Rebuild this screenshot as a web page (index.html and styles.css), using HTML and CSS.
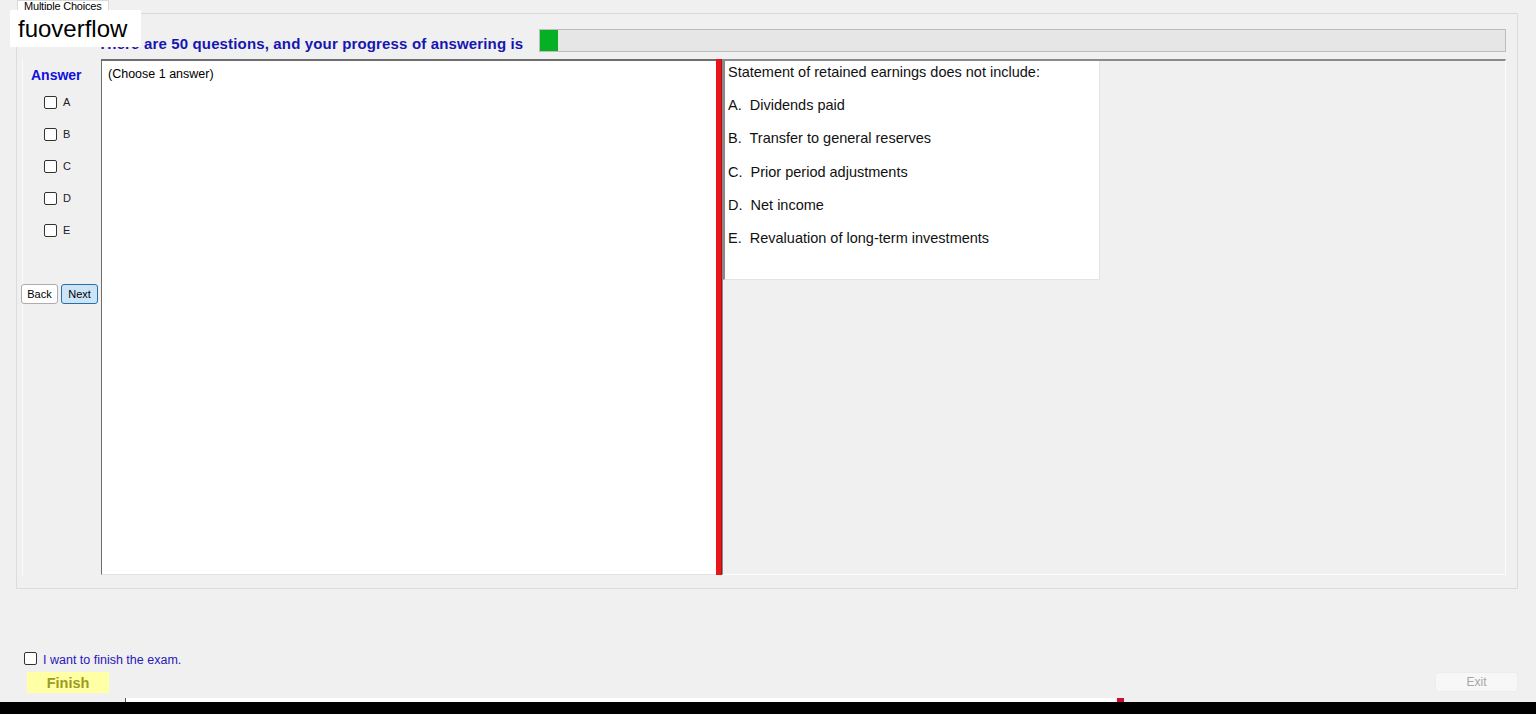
FILE: index.html
```html
<!DOCTYPE html>
<html lang="en">
<head>
    <meta charset="UTF-8" />
    <title>Multiple Choices</title>
    <link rel="stylesheet" href="styles.css">
</head>
<body>
    <div id="window">
        <div class="tab-strip">
            <div class="tab">Multiple Choices</div>
        </div>

        <div class="tab-panel">
            <div class="header">
                <div class="heading">There are 50 questions, and your progress of answering is</div>
                <div class="progress"><div class="progress-fill"></div></div>
            </div>

            <div class="main">
                <div class="side">
                    <div class="answer-title">Answer</div>
                    <div class="choices">
                        <label class="choice"><span class="box"></span>A</label>
                        <label class="choice"><span class="box"></span>B</label>
                        <label class="choice"><span class="box"></span>C</label>
                        <label class="choice"><span class="box"></span>D</label>
                        <label class="choice"><span class="box"></span>E</label>
                    </div>
                    <div class="nav">
                        <button class="btn">Back</button>
                        <button class="btn btn-active">Next</button>
                    </div>
                </div>

                <div class="note-box">(Choose 1 answer)</div>
                <div class="splitter"></div>

                <div class="question-panel">
                    <div class="question">
                        <p>Statement of retained earnings does not include:</p>
                        <p>A.&nbsp; Dividends paid</p>
                        <p>B.&nbsp; Transfer to general reserves</p>
                        <p>C.&nbsp; Prior period adjustments</p>
                        <p>D.&nbsp; Net income</p>
                        <p>E.&nbsp; Revaluation of long-term investments</p>
                    </div>
                </div>
            </div>
        </div>

        <div class="footer">
            <div class="finish-group">
                <label class="finish-check"><span class="box"></span><span class="finish-text">I want to finish the exam.</span></label>
                <button class="btn-finish">Finish</button>
            </div>
            <button class="btn-exit" disabled>Exit</button>
        </div>

        <div class="strip"><span class="strip-white"></span><span class="strip-red"></span></div>
        <div class="taskbar"></div>

        <div class="watermark">fuoverflow</div>
    </div>
</body>
</html>
```

FILE: styles.css
```css
* { box-sizing: border-box; }
html, body {
    margin: 0;
    padding: 0;
}
body {
    font-family: "Liberation Sans", Arial, sans-serif;
    background: #f0f0f0;
    color: #000;
    overflow: hidden;
}
#window {
    position: relative;
    width: 1536px;
    height: 714px;
}

/* ───────── Tabs ───────── */
.tab-strip {
    height: 13px;
    padding-left: 17px;
}
.tab {
    width: 92px;
    height: 13px;
    background: #ffffff;
    border: 1px solid #d9d9d9;
    border-bottom: none;
    font-size: 11px;
    line-height: 11px;
    padding-left: 6px;
    color: #000;
    overflow: hidden;
    letter-spacing: -0.2px;
}
.tab-panel {
    margin: 0 18px 0 16px;
    height: 576px;
    border: 1px solid #dcdcdc;
    border-top-color: #d9d9d9;
    padding: 15px 11px 0 5px;
}

/* ───────── Header ───────── */
.header {
    display: flex;
    align-items: flex-end;
    height: 23px;
    padding-left: 76px;
}
.heading {
    flex: none;
    font-size: 15px;
    font-weight: bold;
    line-height: 16px;
    letter-spacing: 0.15px;
    color: #1616b0;
}
.progress {
    flex: 1;
    height: 23px;
    margin-left: 16px;
    background: #e6e6e6;
    border: 1px solid #bcbcbc;
}
.progress-fill {
    width: 18px;
    height: 100%;
    background: #06b025;
}

/* ───────── Main area ───────── */
.main {
    display: flex;
    height: 516px;
    margin-top: 7px;
}
.side {
    width: 79px;
    border-left: 1px solid #fbfbfb;
    padding-top: 8px;
}
.answer-title {
    font-size: 14px;
    font-weight: bold;
    line-height: 16px;
    color: #1010dc;
    padding-left: 8px;
}
.choices {
    margin-top: 3px;
}
.choice {
    display: flex;
    align-items: center;
    height: 32px;
    padding-left: 21px;
    font-size: 11px;
    color: #222;
}
.box {
    display: inline-block;
    width: 13px;
    height: 13px;
    border: 1px solid #333;
    border-radius: 2px;
    background: #fff;
    margin-right: 6px;
}
.nav {
    display: flex;
    gap: 3px;
    margin-top: 38px;
    margin-left: -2px;
}
.btn {
    width: 37px;
    height: 20px;
    padding: 0;
    font-family: inherit;
    font-size: 11px;
    background: #ffffff;
    border: 1px solid #adadad;
    border-radius: 3px;
    color: #000;
}
.btn-active {
    background: #cce4f7;
    border-color: #2a6ea8;
}

.note-box {
    width: 615px;
    background: #ffffff;
    border-top: 2px solid #6e6e6e;
    border-left: 1px solid #6e6e6e;
    border-bottom: 1px solid #e3e3e3;
    padding: 5px 6px;
    font-size: 12.5px;
    line-height: 16px;
}
.splitter {
    width: 6px;
    background: #e8161b;
    border-right: 1px solid #b01010;
}
.question-panel {
    flex: 1;
    border-top: 2px solid #8a8a8a;
    border-left: 1px solid #8a8a8a;
    border-right: 1px solid #fdfdfd;
    border-bottom: 1px solid #fdfdfd;
}
.question {
    width: 377px;
    height: 219px;
    background: #ffffff;
    border-left: 2px solid #8a8a8a;
    border-right: 1px solid #e3e3e3;
    border-bottom: 1px solid #e3e3e3;
    padding: 2px 3px;
    font-size: 14.5px;
    line-height: 18px;
    color: #111;
}
.question p {
    margin: 0 0 15.2px 0;
}

/* ───────── Footer ───────── */
.footer {
    display: flex;
    justify-content: space-between;
    align-items: flex-end;
    margin-top: 63px;
    padding: 0 18px 0 24px;
}
.finish-check {
    display: flex;
    align-items: center;
    height: 13px;
    font-size: 12.5px;
    color: #2a18b8;
}
.finish-text {
    padding-top: 3px;
}
.btn-finish {
    display: block;
    width: 82px;
    height: 21px;
    margin: 7px 0 0 3px;
    padding: 0;
    background: #ffffa6;
    border: none;
    font-family: inherit;
    font-size: 14.5px;
    font-weight: bold;
    color: #9c9c1a;
}
.btn-exit {
    width: 83px;
    height: 20px;
    margin-bottom: 1px;
    padding: 0;
    background: #f7f7f7;
    border: 1px solid #ececec;
    border-radius: 3px;
    font-family: inherit;
    font-size: 12px;
    color: #a6a6a6;
}

.strip {
    display: flex;
    gap: 2px;
    height: 4px;
    margin-top: 5px;
    padding-left: 125px;
}
.strip-white {
    width: 990px;
    background: #ffffff;
    border-left: 1px solid #555;
}
.strip-red {
    width: 7px;
    background: #c8102e;
}
.taskbar {
    height: 12px;
    background: #000;
}

/* watermark sits over the window */
.watermark {
    position: absolute;
    left: 10px;
    top: 10px;
    width: 131px;
    height: 37px;
    background: #ffffff;
    font-size: 24px;
    line-height: 37px;
    padding-left: 8px;
    color: #000;
}
```
